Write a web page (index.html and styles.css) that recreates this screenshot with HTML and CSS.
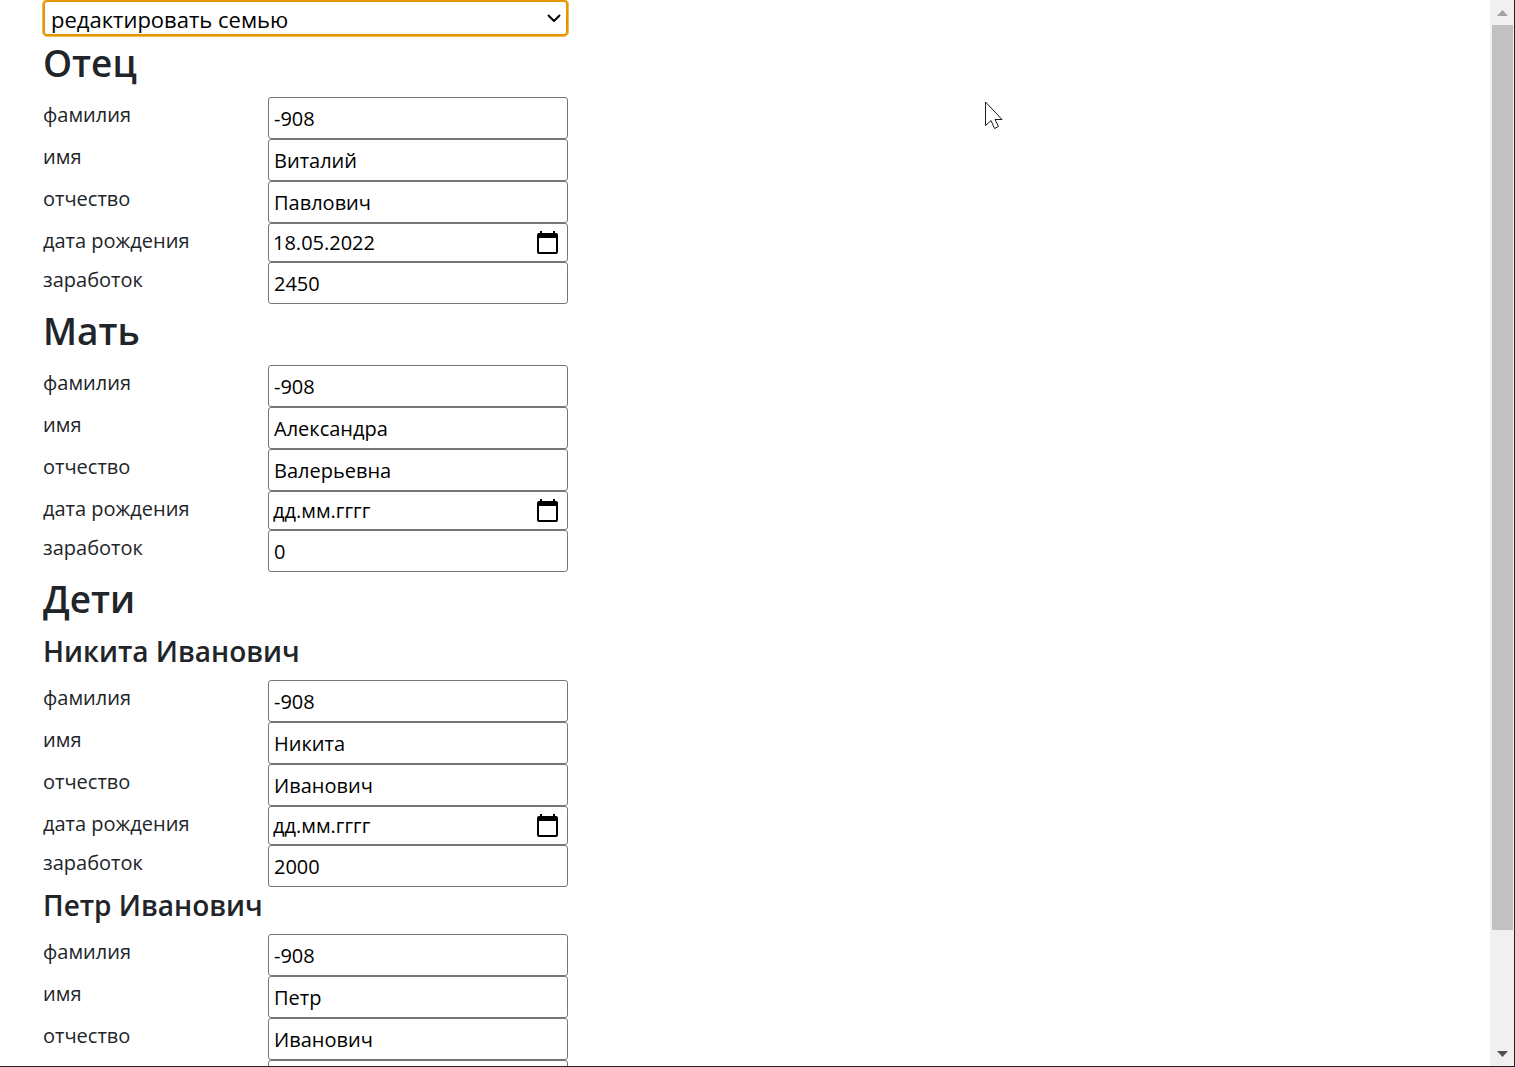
FILE: index.html
```html
<!DOCTYPE html>
<html lang="ru">
<head>
<meta charset="utf-8">
<title>Редактировать семью</title>
<link rel="stylesheet" href="styles.css">
</head>
<body>
<svg class="sprite" aria-hidden="true">
  <symbol id="calendar" viewBox="0 0 21 24">
    <path fill="currentColor" fill-rule="evenodd" d="M3 0h2v2h11V0h2v2h1a2 2 0 0 1 2 2v17a2 2 0 0 1-2 2H2a2 2 0 0 1-2-2V4a2 2 0 0 1 2-2h1zM2 7v14h17V7z"/>
  </symbol>
</svg>
<main class="page">
  <form class="family">
    <select class="mode" aria-label="Действие"><option>редактировать семью</option></select>

    <h1 class="title">Отец</h1>
    <div class="person">
      <label class="label" for="f1">фамилия</label><input class="field" id="f1" value="-908">
      <label class="label" for="f2">имя</label><input class="field" id="f2" value="Виталий">
      <label class="label" for="f3">отчество</label><input class="field" id="f3" value="Павлович">
      <label class="label" for="f4">дата рождения</label>
      <div class="date"><input class="date-text" id="f4" placeholder="дд.мм.гггг" value="18.05.2022"><button class="pick" type="button" aria-label="Выбрать дату"><svg class="icon"><use href="#calendar"/></svg></button></div>
      <label class="label" for="f5">заработок</label><input class="field" id="f5" value="2450">
    </div>

    <h1 class="title">Мать</h1>
    <div class="person">
      <label class="label" for="m1">фамилия</label><input class="field" id="m1" value="-908">
      <label class="label" for="m2">имя</label><input class="field" id="m2" value="Александра">
      <label class="label" for="m3">отчество</label><input class="field" id="m3" value="Валерьевна">
      <label class="label" for="m4">дата рождения</label>
      <div class="date"><input class="date-text" id="m4" placeholder="дд.мм.гггг"><button class="pick" type="button" aria-label="Выбрать дату"><svg class="icon"><use href="#calendar"/></svg></button></div>
      <label class="label" for="m5">заработок</label><input class="field" id="m5" value="0">
    </div>

    <h1 class="title">Дети</h1>
    <h2 class="child">Никита Иванович</h2>
    <div class="person">
      <label class="label" for="a1">фамилия</label><input class="field" id="a1" value="-908">
      <label class="label" for="a2">имя</label><input class="field" id="a2" value="Никита">
      <label class="label" for="a3">отчество</label><input class="field" id="a3" value="Иванович">
      <label class="label" for="a4">дата рождения</label>
      <div class="date"><input class="date-text" id="a4" placeholder="дд.мм.гггг"><button class="pick" type="button" aria-label="Выбрать дату"><svg class="icon"><use href="#calendar"/></svg></button></div>
      <label class="label" for="a5">заработок</label><input class="field" id="a5" value="2000">
    </div>

    <h2 class="child">Петр Иванович</h2>
    <div class="person">
      <label class="label" for="b1">фамилия</label><input class="field" id="b1" value="-908">
      <label class="label" for="b2">имя</label><input class="field" id="b2" value="Петр">
      <label class="label" for="b3">отчество</label><input class="field" id="b3" value="Иванович">
      <label class="label" for="b4"></label>
      <div class="date"><input class="date-text" id="b4" aria-label="дата рождения"></div>
    </div>
  </form>
</main>
<div class="scrollbar" aria-hidden="true">
  <svg class="arrow arrow-up" viewBox="0 0 11 6"><path d="M0 6 5.500 0 11 6z"/></svg>
  <div class="track"><div class="thumb"></div></div>
  <svg class="arrow" viewBox="0 0 11 6"><path d="M0 0h11L5.500 6z"/></svg>
</div>
<svg class="cursor" viewBox="0 0 19 28" aria-hidden="true"><path d="M.5 1v23.500l5.500-5 3.500 8 4-2-3.500-7h7z"/></svg>
</body>
</html>
```
FILE: styles.css
```css
* { box-sizing: border-box; }

body {
  display: flex;
  height: 100vh;
  margin: 0;
  overflow: hidden;
  border-right: 1px solid #222;
  border-bottom: 1px solid #222;
  background: #fff;
  color: #212529;
  font-family: "Segoe UI", "Open Sans", "Noto Sans", sans-serif;
  font-size: 20px;
}

.sprite { position: absolute; width: 0; height: 0; }

.page {
  flex: 1;
  min-width: 0;
  overflow: hidden;
  padding-left: 43px;
}

.family { max-width: 525px; }

.mode {
  display: block;
  width: 100%;
  height: 36px;
  padding: 2px 3px 0 6px;
  border: 2px solid #e59700;
  border-radius: 4px;
  outline: 1px solid #efbb58;
  outline-offset: 0;
  appearance: none;
  background: #fff url("data:image/svg+xml,%3Csvg xmlns='http://www.w3.org/2000/svg' viewBox='0 0 14 8'%3E%3Cpath d='M1 1l6 6 6-6' fill='none' stroke='%23000' stroke-width='2'/%3E%3C/svg%3E") no-repeat right 5px center / 14px 8px;
  color: #000;
  font: inherit;
  font-size: 22px;
}

.title {
  height: 61px;
  margin: 0;
  padding-top: 3px;
  font-size: 37px;
  font-weight: 600;
  line-height: 48px;
}

.child {
  height: 47px;
  margin: 0;
  font-size: 28px;
  font-weight: 600;
  line-height: 36px;
}

.person {
  display: grid;
  grid-template-columns: 3fr 4fr;
}

.label { line-height: 36px; }

.field,
.date {
  width: 100%;
  border: 1px solid #767676;
  border-radius: 3px;
  background: #fff;
}

.field {
  height: 42px;
  padding: 0 5px;
  color: #000;
  font: inherit;
}

.date {
  display: flex;
  align-items: center;
  height: 39px;
  padding: 0 9px 0 4px;
}

.date-text {
  flex: 1;
  min-width: 0;
  padding: 0;
  border: 0;
  outline: 0;
  background: none;
  color: #000;
  font: inherit;
}

.date-text::placeholder { color: #000; opacity: 1; }

.pick {
  display: flex;
  padding: 0;
  border: 0;
  background: none;
  color: #000;
}

.icon { width: 21px; height: 24px; }

.scrollbar {
  display: flex;
  flex-direction: column;
  align-items: center;
  width: 24px;
  padding: 10px 1px 9px 2px;
  background: #f0f0f0;
}

.arrow { width: 11px; height: 6px; fill: #505050; }
.arrow-up { fill: #a3a3a3; }

.track { flex: 1; width: 100%; padding: 9px 0; }
.thumb { height: 89%; background: #c1c1c1; }

.cursor {
  position: absolute;
  top: 101px;
  left: 985px;
  width: 19px;
  height: 28px;
  fill: #fff;
  stroke: #1c1824;
}
```
